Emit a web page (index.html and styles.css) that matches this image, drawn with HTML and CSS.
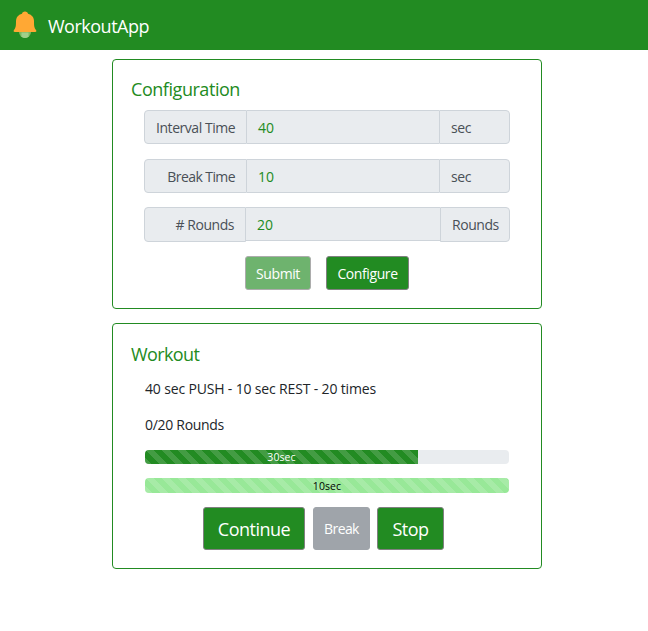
FILE: index.html
```
<!DOCTYPE html>
<html lang="en">
<head>
<meta charset="utf-8">
<title>WorkoutApp</title>
<link rel="stylesheet" href="styles.css">
</head>
<body>
<nav class="navbar">
  <svg class="bell" viewBox="0 0 26 29" aria-hidden="true">
    <circle cx="13" cy="21" r="6" fill="#7cb960"/>
    <path d="M9.500 21.500h7v4.200a6 6 0 0 1-7 0z" fill="#a0cf8b"/>
    <path d="M13 .5c1.700 0 2.800 1 3 2.200 4 1 6 4 6 7.500 0 5 .3 6.500 2 8.800.8 1 .3 2-.8 2H2.800c-1.100 0-1.600-1-.8-2 1.700-2.300 2-3.800 2-8.800 0-3.500 2-6.500 6-7.500.2-1.200 1.300-2.200 3-2.200z" fill="#ffa834"/>
  </svg>
  <span class="brand">WorkoutApp</span>
</nav>
<main class="page">
  <section class="card config">
    <h2 class="title">Configuration</h2>
    <div class="group">
      <span class="label">Interval Time</span>
      <span class="field">40</span>
      <span class="unit">sec</span>
    </div>
    <div class="group">
      <span class="label break-label">Break Time</span>
      <span class="field">10</span>
      <span class="unit">sec</span>
    </div>
    <div class="group rounds">
      <span class="label">#&nbsp;Rounds</span>
      <span class="field">20</span>
      <span class="unit">Rounds</span>
    </div>
    <div class="actions">
      <button class="btn submit" disabled>Submit</button>
      <button class="btn configure">Configure</button>
    </div>
  </section>
  <section class="card workout">
    <h2 class="title">Workout</h2>
    <p class="summary">40 sec PUSH - 10 sec REST - 20 times</p>
    <p class="count">0/20 Rounds</p>
    <div class="progress"><div class="bar work" style="width:75%">30sec</div></div>
    <div class="progress rest-track"><div class="bar rest" style="width:100%">10sec</div></div>
    <div class="controls">
      <button class="btn large continue">Continue</button>
      <button class="btn break" disabled>Break</button>
      <button class="btn large stop">Stop</button>
    </div>
  </section>
</main>
</body>
</html>
```
FILE: styles.css
```
* { box-sizing: border-box; }
body {
  margin: 0;
  background: #fff;
  color: #212529;
  font: 14px/22px "Open Sans", "Noto Sans", sans-serif;
  letter-spacing: -0.3px;
}
.navbar {
  display: flex;
  align-items: center;
  height: 50px;
  padding-left: 12px;
  background: #228b22;
  color: #fff;
}
.bell { width: 26px; height: 29px; margin-right: 10px; }
.brand { font-size: 18px; line-height: 27px; padding-top: 3px; letter-spacing: -0.5px; }
.page { width: 430px; margin: 9px 0 0 112px; }
.card {
  border: 1px solid #228b22;
  border-radius: 4px;
  padding: 17px 31px 0;
}
.config { height: 250px; margin-bottom: 14px; }
.workout { height: 246px; padding-left: 32px; padding-right: 32px; }
.title {
  margin: 0 0 8px -13px;
  color: #228b22;
  font-size: 18px;
  font-weight: 400;
  line-height: 25px;
  letter-spacing: -0.45px;
}
.workout .title { margin-left: -14px; margin-bottom: 7px; line-height: 26px; letter-spacing: -0.6px; }
.group {
  display: grid;
  grid-template-columns: 103px 192px 71px;
  height: 34px;
  width: 366px;
  margin-bottom: 15px;
}
.group + .group { margin-bottom: 14px; }
.label, .field, .unit {
  border: 1px solid #ced4da;
  background: #e9ecef;
  color: #495057;
  padding: 6px 11px 0;
  line-height: 22px;
  white-space: nowrap;
  letter-spacing: -0.45px;
}
.label { text-align: right; border-radius: 4px 0 0 4px; }
.break-label { letter-spacing: -0.58px; }
.field { color: #228b22; border-width: 1px 0; letter-spacing: -0.1px; }
.unit { border-radius: 0 4px 4px 0; }
.rounds { height: 35px; grid-template-columns: 102px 194px 70px; }
.rounds .field { height: 34px; }
.actions { display: flex; padding-left: 101px; gap: 15px; }
.btn {
  font: inherit;
  letter-spacing: inherit;
  height: 34px;
  padding: 2px 0 0;
  border: 1px solid #808080;
  border-radius: 3px;
  background: #228b22;
  color: #fff;
  white-space: nowrap;
}
.submit { width: 66px; opacity: .65; letter-spacing: -0.4px; }
.configure { width: 83px; letter-spacing: -0.4px; }
.summary, .count { margin: 0; }
.summary { margin-top: 11px; margin-bottom: 14px; letter-spacing: -0.16px; }
.count { margin-bottom: 14px; }
.progress {
  height: 14px;
  overflow: hidden;
  border-radius: 4px;
  background: #e9ecef;
  margin-bottom: 14px;
}
.rest-track { height: 15px; }
.bar {
  height: 100%;
  background-image: linear-gradient(45deg, rgba(255,255,255,.15) 25%, transparent 25%, transparent 50%, rgba(255,255,255,.15) 50%, rgba(255,255,255,.15) 75%, transparent 75%, transparent);
  background-size: 16px 16px;
  font-size: 10.5px;
  line-height: 15px;
  letter-spacing: 0.1px;
  text-align: center;
}
.work { background-color: #228b22; color: #fff; }
.rest { background-color: #98e898; color: #000; line-height: 16px; }
.controls { display: flex; padding-left: 58px; }
.controls .btn { height: 43px; padding-top: 1px; }
.controls .large { font-size: 18px; letter-spacing: -0.5px; }
.continue { width: 102px; margin-right: 8px; }
.controls .break { width: 57px; margin-right: 7px; background: #6c757d; border-color: #6c757d; opacity: .65; letter-spacing: -0.6px; }
.stop { width: 67px; }
```
